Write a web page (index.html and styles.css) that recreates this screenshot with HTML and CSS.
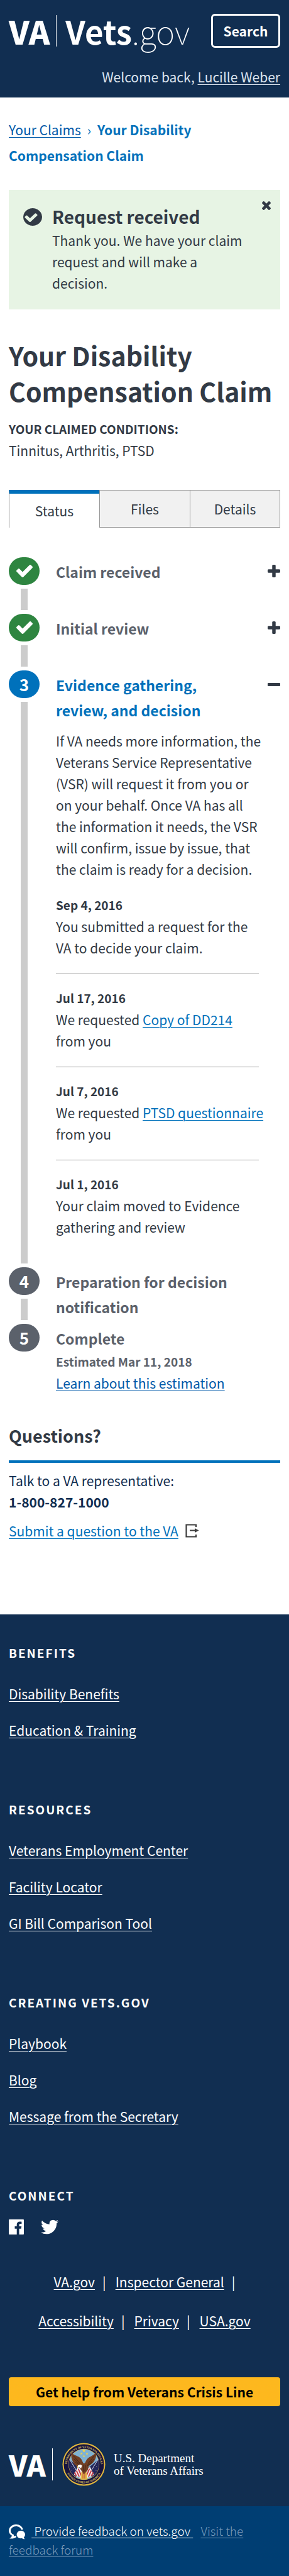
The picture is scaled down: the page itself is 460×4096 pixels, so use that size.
FILE: index.html
```html
<!DOCTYPE html>
<html lang="en">
<head>
<meta charset="utf-8">
<meta name="viewport" content="width=device-width, initial-scale=1">
<title>Your Disability Compensation Claim: Vets.gov</title>
<link rel="stylesheet" href="styles.css">
</head>
<body>
<svg class="defs" aria-hidden="true">
  <symbol id="check" viewBox="121 343 1550 1179"><path d="M1671 566q0 40-28 68l-724 724-136 136q-28 28-68 28t-68-28l-136-136-362-362q-28-28-28-68t28-68l136-136q28-28 68-28t68 28l294 295 656-657q28-28 68-28t68 28l136 136q28 28 28 68z"/></symbol>
  <symbol id="plus" viewBox="192 128 1408 1408"><path d="M1600 736v192q0 40-28 68t-68 28h-416v416q0 40-28 68t-68 28h-192q-40 0-68-28t-28-68v-416h-416q-40 0-68-28t-28-68v-192q0-40 28-68t68-28h416v-416q0-40 28-68t68-28h192q40 0 68 28t28 68v416h416q40 0 68 28t28 68z"/></symbol>
</svg>

<header class="header">
  <div class="header-row">
    <a class="brand" href="#"><span class="brand-va">VA</span><span class="brand-rule"></span><span class="brand-name">Vets<span class="brand-tld">.gov</span></span></a>
    <button class="search" type="button">Search</button>
  </div>
  <p class="welcome">Welcome back, <a href="#">Lucille Weber</a></p>
</header>

<main class="main">
  <nav class="crumbs" aria-label="Breadcrumb">
    <a href="#">Your Claims</a><span class="crumb-sep">›</span><strong>Your Disability Compensation Claim</strong>
  </nav>

  <section class="alert">
    <svg class="alert-icon" viewBox="128 128 1536 1536" preserveAspectRatio="none" aria-hidden="true"><path d="M1284 734q0-28-18-46l-91-90q-19-19-45-19t-45 19l-408 407-226-226q-19-19-45-19t-45 19l-91 90q-18 18-18 46 0 27 18 45l362 362q19 19 45 19 27 0 46-19l543-543q18-18 18-45zm380 162q0 209-103 385.500t-279.500 279.500-385.500 103-385.500-103-279.500-279.500-103-385.500 103-385.500 279.500-279.500 385.500-103 385.500 103 279.500 279.500 103 385.500z"/></svg>
    <div class="alert-body">
      <h2>Request received</h2>
      <p>Thank you. We have your claim request and will make a decision.</p>
    </div>
    <button class="close" type="button" aria-label="Close">
      <svg viewBox="302 366 1188 1188" aria-hidden="true"><path d="M1490 1322q0 40-28 68l-136 136q-28 28-68 28t-68-28l-294-294-294 294q-28 28-68 28t-68-28l-136-136q-28-28-28-68t28-68l294-294-294-294q-28-28-28-68t28-68l136-136q28-28 68-28t68 28l294 294 294-294q28-28 68-28t68 28l136 136q28 28 28 68t-28 68l-294 294 294 294q28 28 28 68z"/></svg>
    </button>
  </section>

  <h1>Your Disability Compensation Claim</h1>
  <h2 class="label">Your claimed conditions:</h2>
  <p>Tinnitus, Arthritis, PTSD</p>

  <div class="tabs" role="tablist">
    <button class="tab tab-active" type="button" role="tab" aria-selected="true">Status</button>
    <button class="tab" type="button" role="tab" aria-selected="false">Files</button>
    <button class="tab" type="button" role="tab" aria-selected="false">Details</button>
  </div>

  <ol class="steps">
    <li class="step step-done">
      <div class="rail"><span class="marker"><svg aria-hidden="true"><use href="#check"/></svg></span></div>
      <h3>Claim received</h3>
      <button class="toggle" type="button" aria-label="Expand"><svg aria-hidden="true"><use href="#plus"/></svg></button>
    </li>
    <li class="step step-done">
      <div class="rail"><span class="marker"><svg aria-hidden="true"><use href="#check"/></svg></span></div>
      <h3>Initial review</h3>
      <button class="toggle" type="button" aria-label="Expand"><svg aria-hidden="true"><use href="#plus"/></svg></button>
    </li>
    <li class="step step-current">
      <div class="rail"><span class="marker">3</span></div>
      <div class="step-body">
        <h3>Evidence gathering, review, and decision</h3>
        <p class="intro">If VA needs more information, the Veterans Service Representative (VSR) will request it from you or on your behalf. Once VA has all the information it needs, the VSR will confirm, issue by issue, that the claim is ready for a decision.</p>
        <div class="event"><h4>Sep 4, 2016</h4><p>You submitted a request for the VA to decide your claim.</p></div>
        <div class="event"><h4>Jul 17, 2016</h4><p><span class="request">We requested <a href="#">Copy of DD214</a></span> from you</p></div>
        <div class="event"><h4>Jul 7, 2016</h4><p><span class="request">We requested <a href="#">PTSD questionnaire</a></span> from you</p></div>
        <div class="event"><h4>Jul 1, 2016</h4><p>Your claim moved to Evidence gathering and review</p></div>
      </div>
      <button class="toggle" type="button" aria-label="Collapse"><svg viewBox="0 0 20 20" aria-hidden="true"><rect y="8" width="20" height="5" rx="1"/></svg></button>
    </li>
    <li class="step">
      <div class="rail"><span class="marker">4</span></div>
      <h3>Preparation for decision notification</h3>
    </li>
    <li class="step">
      <div class="rail"><span class="marker">5</span></div>
      <div class="step-body">
        <h3>Complete</h3>
        <h4>Estimated Mar 11, 2018</h4>
        <p><a class="link-dark" href="#">Learn about this estimation</a></p>
      </div>
    </li>
  </ol>

  <section class="help">
    <h2>Questions?</h2>
    <p>Talk to a VA representative:</p>
    <p><strong>1-800-827-1000</strong></p>
    <p class="ask"><a href="#">Submit a question to the VA</a>
      <svg class="exit" viewBox="0 0 22 22" aria-hidden="true"><path d="M17 5V1.500H1.500v19H17V17M7 10.500h9" fill="none" stroke="#3e3e3e" stroke-width="2.200"/><path d="M15 7l6.500 3.500L15 14z" fill="#3e3e3e"/></svg>
    </p>
  </section>
</main>

<footer class="footer">
  <section><h2>Benefits</h2><ul><li><a href="#">Disability Benefits</a></li><li><a href="#">Education &amp; Training</a></li></ul></section>
  <section><h2>Resources</h2><ul><li><a href="#">Veterans Employment Center</a></li><li><a href="#">Facility Locator</a></li><li><a href="#">GI Bill Comparison Tool</a></li></ul></section>
  <section><h2>Creating Vets.gov</h2><ul><li><a href="#">Playbook</a></li><li><a href="#">Blog</a></li><li><a href="#">Message from the Secretary</a></li></ul></section>
  <section>
    <h2>Connect</h2>
    <div class="social">
      <a href="#" aria-label="Facebook"><svg viewBox="0 0 24 24"><path d="M1 0h22a1 1 0 0 1 1 1v22a1 1 0 0 1-1 1h-6.500v-9.300h3.200l.5-3.600h-3.700V8.800c0-1.100.4-1.800 1.900-1.800h2V3.700c-.4 0-1.500-.1-2.900-.1-2.900 0-4.800 1.700-4.800 4.900v2.600H9.500v3.600h3.200V24H1a1 1 0 0 1-1-1V1a1 1 0 0 1 1-1z"/></svg></a>
      <a href="#" aria-label="Twitter"><svg class="bird" viewBox="108 256 1576 1280"><path d="M1684 408q-67 98-162 167 1 14 1 42 0 130-38 259.500t-115.500 248.500-184.500 210.500-258 146-323 54.500q-271 0-496-145 35 4 78 4 225 0 401-138-105-2-188-64.500t-114-159.500q33 5 61 5 43 0 85-11-112-23-185.500-111.500t-73.500-205.500v-4q68 38 146 41-66-44-105-115t-39-154q0-88 44-163 121 149 294.500 238.500t371.500 99.500q-8-38-8-74 0-134 94.500-228.500t228.500-94.500q140 0 236 102 109-21 205-78-37 115-142 178 93-10 186-50z"/></svg></a>
    </div>
  </section>
  <ul class="legal">
    <li><a href="#">VA.gov</a></li><li><a href="#">Inspector General</a></li><li><a href="#">Accessibility</a></li><li><a href="#">Privacy</a></li><li><a href="#">USA.gov</a></li>
  </ul>
  <button class="crisis" type="button">Get help from Veterans Crisis Line</button>
  <div class="agency">
    <span class="agency-va">VA</span>
    <svg class="seal" viewBox="0 0 140 140" role="img" aria-label="Department of Veterans Affairs seal">
      <defs>
        <path id="arc-top" d="M18 90a55 55 0 1 1 104 0"/>
        <path id="arc-bottom" d="M9 70a61 61 0 0 0 122 0"/>
        <clipPath id="disc"><circle cx="70" cy="70" r="49"/></clipPath>
      </defs>
      <circle cx="70" cy="70" r="69" fill="#e3b83c"/>
      <circle cx="70" cy="70" r="65" fill="#17143f"/>
      <circle cx="70" cy="70" r="50" fill="#d8b34a"/>
      <g clip-path="url(#disc)">
        <circle cx="70" cy="70" r="49" fill="#7fb2d3"/>
        <path d="M20 52l34 28-10 30-24-10zM120 52L86 80l10 30 24-10z" fill="#232659"/>
        <path d="M24 54l32 52M116 54L84 106" stroke="#d9e2ec" stroke-width="2"/>
        <path d="M31 67h1M30 76h1M37 72h1M37 83h1M30 89h1M44 88h1M108 67h1M110 77h1M102 73h1M102 84h1M109 90h1M96 88h1" stroke="#fff" stroke-width="2"/>
        <path d="M50 78l14 10 4 30-30-14zM90 78L76 88l-4 30 30-14z" fill="#f3eeee"/>
        <path d="M52 84l12 28M46 90l9 20M40 96l6 12M88 84l-12 28M94 90l-9 20M100 96l-6 12" stroke="#c43d48" stroke-width="4"/>
        <path d="M62 94h16l4 22-12 10-11-10z" fill="#e3bd45"/>
        <path d="M67 96v20M73 96v20" stroke="#b93540" stroke-width="2"/>
      </g>
      <path d="M30 32c6 7 13 9 20 12 10 4 13 10 17 20 1 4 6 4 8-1 4-11 9-15 18-19 8-4 14-9 18-14-1 10-1 17-5 25-4 9-12 16-20 20l-4 15-12 12-9-13-6-10c-8-2-17-8-20-16-5-10-7-21-5-31z" fill="#713f24"/>
      <path d="M36 42l21 24M38 52l20 19M42 62l18 14M104 42L84 66M103 52L82 71M98 62L80 76M69 72v22M75 72l-2 20" fill="none" stroke="#3f2417" stroke-width="2"/>
      <path d="M50 75c3-6 10-6 14-1l-3 9-5-4-7 1z" fill="#fff"/>
      <path d="M50 75l-4 4 5 2z" fill="#eebf3b"/>
      <path d="M70 20l1.500 4h4l-3 3 1 4-3.500-2-3.500 2 1-4-3-3h4zM62 31l1 3h3l-2 2 1 3-3-2-3 2 1-3-2-2h3zM80 31l1 3h3l-2 2 1 3-3-2-3 2 1-3-2-2h3zM70 39l1 3h3l-2 2 1 3-3-2-3 2 1-3-2-2h3z" fill="#efd24d"/>
      <g class="seal-text"><text><textPath href="#arc-top" startOffset="50%">DEPARTMENT OF VETERANS AFFAIRS</textPath></text><text><textPath href="#arc-bottom" startOffset="50%">UNITED STATES OF AMERICA</textPath></text></g>
    </svg>
    <span class="agency-name">U.S. Department<br>of Veterans Affairs</span>
  </div>
</footer>

<aside class="feedback">
  <svg class="chat" viewBox="0 0 26 24" aria-hidden="true"><path d="M1 22.300c2.200-1 3.500-2.500 4-4.500C2 16.200 0 13.300 0 10.200 0 4.600 5 0 11.500 0c5.700 0 10.300 3.500 11.300 8.200l-2.800.2C18.900 5.200 15.500 3 11.500 3 6.600 3 3 6.300 3 10.200c0 2.900 2 5 5.200 6.200l-.4 2.300 3.700-.9.500 2.200c-3 2.300-7 3-11 2.300z"/><path d="M19.300 10c3.700 0 6.700 2.700 6.700 6 0 1.800-.9 3.300-2 4.400.2 1.200.8 2.200 1.600 2.900-1.800.2-3.300-.3-4.600-1.300-4.700.9-8.400-2-8.400-6 0-3.300 3-6 6.700-6z"/></svg>
  <a class="feedback-main" href="#">&nbsp;Provide feedback on vets.gov&nbsp;</a>
  <a class="feedback-forum" href="#">Visit the feedback forum</a>
</aside>
</body>
</html>
```
FILE: styles.css
```css
* { box-sizing: border-box; }
body, h1, h2, h3, h4, p, ul, ol { margin: 0; padding: 0; }
ul, ol { list-style: none; }

body {
  background: #fff;
  color: #323a45;
  font: 400 21px/34px "Noto Sans CJK SC", "Open Sans", sans-serif;
}

button { font: inherit; color: inherit; cursor: pointer; padding: 0; }
a { color: #0071bb; text-underline-offset: 3px; text-decoration-thickness: 1px; }
svg { display: block; fill: currentColor; }
.defs { position: absolute; width: 0; height: 0; }

.header { background: #112e51; color: #fff; padding: 22px 14px 16px; }
.header-row { display: flex; justify-content: space-between; align-items: center; }
.brand { display: flex; align-items: center; color: #fff; text-decoration: none; font-size: 51px; line-height: 54px; }
.brand-va { font-weight: 900; }
.brand-rule { width: 1px; height: 50px; margin: 0 14px 0 10px; background: #fff; }
.brand-name { font-weight: 700; }
.brand-tld { font-weight: 100; }
.search { width: 110px; height: 54px; background: transparent; border: 3px solid #fff; border-radius: 6px; font-weight: 700; }
.welcome { margin-top: 29px; text-align: right; color: #dce4ef; }
.welcome a { color: inherit; }

.main { padding: 31px 14px 116px; }
.crumbs { line-height: 41px; color: #0071bb; margin-bottom: 34px; padding-right: 100px; }
.crumbs a, .step .link-dark { color: #0059a9; }
.crumb-sep { margin: 0 10px; }

.alert { display: flex; align-items: flex-start; background: #e7f4e4; padding: 24px 15px 25px 23px; }
.alert-icon { width: 30px; height: 28px; margin-top: 5px; flex: none; }
.alert-body { flex: 1; padding: 0 24px 0 16px; }
.alert h2 { font-size: 28px; line-height: 36px; margin-bottom: 3px; }
.close { display: flex; background: none; border: 0; margin-top: -6px; }
.close svg { width: 14px; height: 14px; }

h1 { margin: 44px 0 15px; font-size: 41px; line-height: 57px; }
.label { font-size: 19px; line-height: 34px; text-transform: uppercase; }

.tabs { display: grid; grid-template-columns: repeat(3, 1fr); margin: 46px 0 47px; }
.tab { height: 60px; background: #f1f1f1; border: 1px solid #999; border-right-width: 0; }
.tab:last-child { border-right-width: 1px; }
.tab-active { background: #fff; border-top: 6px solid #0071bb; border-bottom: 0; }

.step { display: flex; min-height: 90px; color: #5b616b; }
.rail { display: flex; flex-direction: column; align-items: center; flex: none; width: 49px; margin-right: 26px; }
.rail::after { content: ""; flex: 1; width: 11px; margin: 6px 0; background: #ccc; }
.step:last-child .rail::after { display: none; }
.marker { display: flex; align-items: center; justify-content: center; width: 49px; height: 44px; border-radius: 22px; background: #5b616b; color: #fff; font-size: 26px; font-weight: 700; }
.marker svg { width: 26px; height: 20px; }
.step-done .marker { background: #2e8540; }
.step-current .marker { background: #0071bb; }
.step-body, .step > h3 { flex: 1; min-width: 0; }
.step h3 { padding-top: 3px; font-size: 23px; line-height: 40px; }
.step h4 { font-size: 19px; line-height: 34px; }
.step-current { color: #323a45; }
.step-current h3 { color: #0071bb; padding-right: 30px; }
.toggle { display: flex; align-self: flex-start; margin-top: 12px; background: none; border: 0; color: #323a45; }
.toggle svg { width: 20px; height: 20px; }
.intro { margin: 12px 5px 23px 0; }
.event { margin-right: 14px; padding-bottom: 24px; }
.event + .event { border-top: 1px solid #999; padding-top: 21px; }
.event:last-child { padding-bottom: 47px; }
.request { display: block; white-space: nowrap; }

.help { color: #112e51; }
.help h2 { margin: 47px 0 11px; padding-bottom: 19px; border-bottom: 4px solid #0071bb; color: #323a45; font-size: 27px; line-height: 40px; }
.ask { display: flex; align-items: center; gap: 11px; margin-top: 12px; }
.exit { width: 22px; height: 22px; }

.footer { background: #112e51; color: #fff; padding: 44px 14px 32px; }
.footer a { color: #fff; }
.footer section + section { margin-top: 92px; }
.footer h2 { font-size: 19px; line-height: 34px; letter-spacing: 2px; text-transform: uppercase; margin-bottom: 31px; }
.footer section li + li { margin-top: 24px; }
.footer section:last-of-type h2 { margin-bottom: 21px; }
.social { display: flex; gap: 27px; }
.social svg { width: 24px; height: 24px; }
.social .bird { width: 28px; }
.legal { display: flex; flex-wrap: wrap; justify-content: center; column-gap: 15px; margin: 44px 0 59px; padding: 0 40px; line-height: 62px; }
.legal li:not(:last-child)::after { content: "|"; margin-left: 12px; }
.crisis { display: block; width: 100%; height: 46px; background: #fdb81e; border: 0; border-radius: 4px; color: #000; font-weight: 700; }
.agency { display: flex; align-items: center; margin-top: 58px; }
.agency-va { padding-right: 10px; border-right: 1px solid #fff; font-size: 46px; font-weight: 900; line-height: 51px; }
.seal { width: 69px; height: 69px; margin: 0 13px 0 15px; }
.seal-text { fill: #e6cf62; font: 700 9px "Liberation Serif", serif; text-anchor: middle; }
.agency-name { font: 400 19px/20px "Liberation Serif", serif; }

.feedback { background: #003e73; color: #fff; padding: 24px 14px 27px; font-size: 19px; font-weight: 300; line-height: 30px; }
.feedback a { color: #fff; }
.chat { display: inline-block; width: 26px; height: 24px; margin-right: 6px; vertical-align: -6px; }
.feedback .feedback-forum { margin-left: 8px; color: #7a9bbb; }
```
